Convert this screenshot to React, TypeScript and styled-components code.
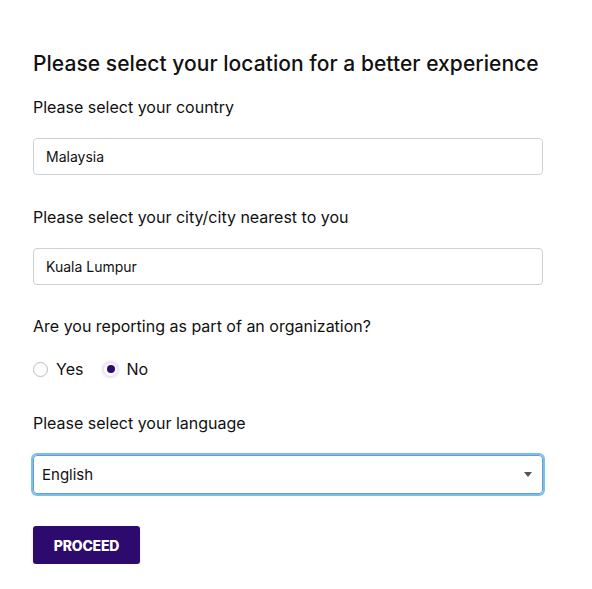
import React from 'react';
import styled, { createGlobalStyle } from 'styled-components';

const GlobalStyle = createGlobalStyle`
  body {
    margin: 0;
    background: #ffffff;
    font-family: Inter, "Noto Sans", sans-serif;
    color: #111;
  }
`;

const Page = styled.div`
  padding: 51px 49px 0 33px;
  width: 510px;
`;

const Title = styled.h1`
  margin: 0 0 20px;
  font-size: 21px;
  font-weight: 500;
  letter-spacing: 0.05px;
`;

const Field = styled.div<{ gap?: number }>`
  display: flex;
  flex-direction: column;
  margin-bottom: ${(p) => p.gap ?? 31}px;
`;

const Label = styled.label<{ space?: number }>`
  font-size: 16px;
  font-weight: 400;
  line-height: 22px;
  margin-bottom: ${(p) => p.space ?? 20}px;
`;

const TextInput = styled.div`
  box-sizing: border-box;
  height: 37px;
  border: 1px solid #cfd2d4;
  border-radius: 4px;
  padding: 0 12px;
  display: flex;
  align-items: center;
  font-size: 14px;
`;

const SelectBox = styled.div`
  box-sizing: border-box;
  height: 39px;
  border: 1px solid #6e9cc4;
  border-radius: 4px;
  box-shadow: 0 0 0 2px #76c0f0;
  padding: 0 10px 0 8px;
  display: flex;
  align-items: center;
  justify-content: space-between;
  font-size: 15px;
`;

const Caret = styled.span`
  width: 0;
  height: 0;
  border-left: 4px solid transparent;
  border-right: 4px solid transparent;
  border-top: 5px solid #555;
`;

const RadioRow = styled.div`
  display: flex;
  align-items: center;
  gap: 20px;
`;

const RadioOption = styled.span`
  display: flex;
  align-items: center;
  gap: 8px;
  font-size: 16px;
`;

const RadioDot = styled.span<{ checked?: boolean }>`
  box-sizing: border-box;
  width: 15px;
  height: 15px;
  border-radius: 50%;
  border: 1px solid ${(p) => (p.checked ? '#e4d8f6' : '#b9bcbf')};
  box-shadow: ${(p) => (p.checked ? '0 0 0 2px #f3eefb' : 'none')};
  background: #fff;
  display: flex;
  align-items: center;
  justify-content: center;
  &::after {
    content: '';
    display: ${(p) => (p.checked ? 'block' : 'none')};
    width: 8px;
    height: 8px;
    border-radius: 50%;
    background: #2e0a6e;
  }
`;

const Button = styled.button`
  margin-top: 32px;
  height: 38px;
  width: 107px;
  border: none;
  border-radius: 3px;
  background: #2d0a6d;
  color: #fff;
  font-family: Inter, sans-serif;
  font-weight: 800;
  font-size: 14px;
  letter-spacing: -0.2px;
  box-shadow: 0 2px 3px rgba(0, 0, 0, 0.12);
`;

export default function App() {
  return (
    <>
      <GlobalStyle />
      <Page>
        <Title>Please select your location for a better experience</Title>
        <Field>
          <Label>Please select your country</Label>
          <TextInput>Malaysia</TextInput>
        </Field>
        <Field gap={30}>
          <Label>Please select your city/city nearest to you</Label>
          <TextInput>Kuala Lumpur</TextInput>
        </Field>
        <Field gap={33}>
          <Label space={22}>Are you reporting as part of an organization?</Label>
          <RadioRow>
            <RadioOption>
              <RadioDot />
              Yes
            </RadioOption>
            <RadioOption>
              <RadioDot checked />
              No
            </RadioOption>
          </RadioRow>
        </Field>
        <Field gap={0}>
          <Label space={21}>Please select your language</Label>
          <SelectBox>
            English
            <Caret />
          </SelectBox>
        </Field>
        <Button>PROCEED</Button>
      </Page>
    </>
  );
}
